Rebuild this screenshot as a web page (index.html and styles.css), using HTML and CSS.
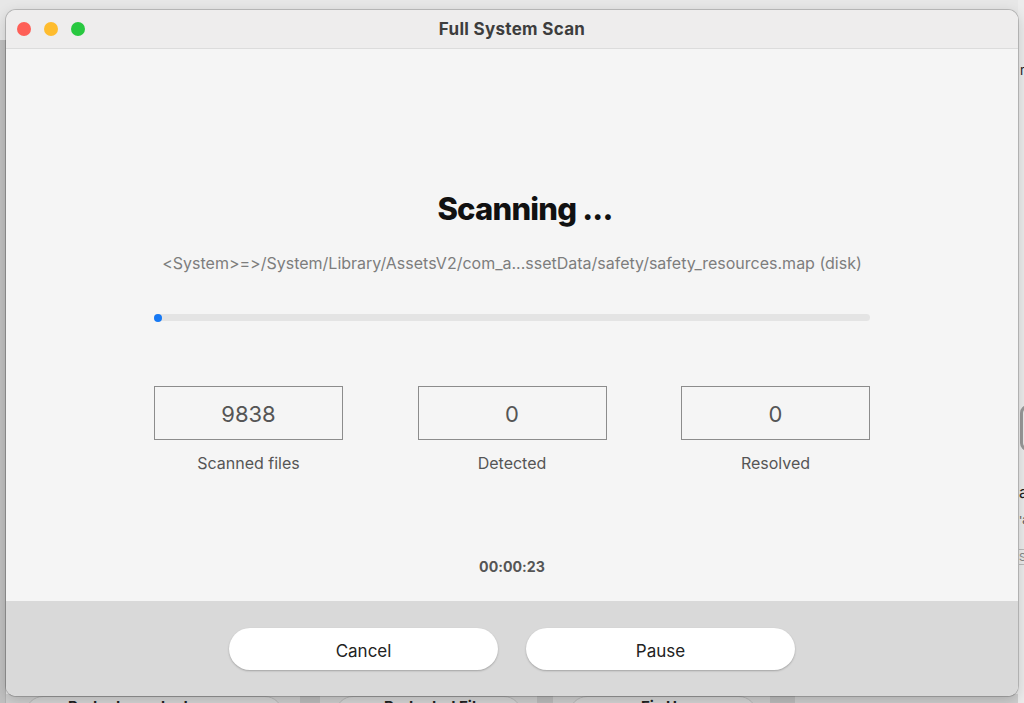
FILE: index.html
```html
<!DOCTYPE html>
<html>
<head>
<meta charset="utf-8">
<link rel="stylesheet" href="styles.css">
</head>
<body>
<div class="desktop">
  <div class="backwin">
    <div class="left-strip"></div>
    <div class="right-bits">
      <span class="rb r1">r</span>
      <span class="rb r2"></span>
      <span class="rb r3">al</span>
      <span class="rb r4">'a</span>
      <span class="rb r5">S</span>
    </div>
    <div class="back-buttons">
      <span class="gap g1"></span>
      <span class="gap g2"></span>
      <span class="gap g3"></span>
      <span class="bb b1">Protect ... ocked</span>
      <span class="bb b2">Protected Files</span>
      <span class="bb b3">Fix Up</span>
    </div>
  </div>
  <div class="window">
    <div class="titlebar">
      <div class="lights">
        <span class="light red"></span>
        <span class="light yellow"></span>
        <span class="light green"></span>
      </div>
      <div class="title">Full System Scan</div>
    </div>
    <div class="content">
      <h1 class="heading">Scanning ...</h1>
      <div class="path">&lt;System&gt;=&gt;/System/Library/AssetsV2/com_a...ssetData/safety/safety_resources.map (disk)</div>
      <div class="progress"><div class="dot"></div></div>
      <div class="stats">
        <div class="stat"><div class="box">9838</div><div class="label">Scanned files</div></div>
        <div class="stat"><div class="box">0</div><div class="label">Detected</div></div>
        <div class="stat"><div class="box">0</div><div class="label">Resolved</div></div>
      </div>
      <div class="timer">00:00:23</div>
    </div>
    <div class="footer">
      <button class="btn">Cancel</button>
      <button class="btn">Pause</button>
    </div>
  </div>
</div>
</body>
</html>
```

FILE: styles.css
```css
html, body {
  margin: 0;
  padding: 0;
  width: 1024px;
  height: 703px;
  overflow: hidden;
}
body {
  background: #e7e7e7;
  font-family: Inter, "Liberation Sans", Arial, sans-serif;
  font-variant-ligatures: none;
  font-feature-settings: "liga" 0, "calt" 0;
}
.desktop {
  position: relative;
  width: 1024px;
  height: 703px;
  padding: 10px 6px 0 6px;
  box-sizing: border-box;
}
.backwin {
  position: absolute;
  inset: 0;
  z-index: 0;
}
.left-strip {
  position: absolute;
  left: 0;
  top: 40px;
  width: 6px;
  bottom: 0;
  background: #c1c1c1;
  border-right: 1px solid #b4b4b4;
  box-sizing: border-box;
}
.right-bits {
  position: absolute;
  left: 1018px;
  top: 0;
  width: 6px;
  bottom: 0;
  background: #ececec;
  overflow: hidden;
}
.rb {
  position: absolute;
  left: 2px;
  font-size: 13px;
  color: #222;
  white-space: nowrap;
}
.r1 { top: 62px; }
.r2 { top: 405px; width: 10px; height: 40px; border: 3px solid #999; border-radius: 8px; }
.r3 { top: 482px; left: 1px; font-size: 16px; }
.r4 { top: 513px; left: 1px; font-size: 11px; color: #555; }
.r5 { top: 549px; left: 1px; font-size: 11px; color: #888; border-top: 1px solid #bbb; border-bottom: 1px solid #bbb; }
.back-buttons {
  position: absolute;
  left: 6px;
  right: 6px;
  top: 694px;
  height: 9px;
  background: #cfcfcf;
  overflow: hidden;
}
.gap {
  position: absolute;
  top: 0;
  bottom: 0;
  background: #bdbdbd;
}
.g1 { left: 294px; width: 20px; }
.g2 { left: 531px; width: 16px; }
.g3 { left: 764px; width: 25px; }
.bb {
  position: absolute;
  top: 2px;
  height: 36px;
  border: 1px solid #b8b8b8;
  border-radius: 18px;
  background: #d6d6d6;
  font-size: 15px;
  font-weight: 700;
  color: #222;
  line-height: 16px;
  padding-top: 2px;
  box-sizing: border-box;
  white-space: nowrap;
}
.b1 { left: 19px; width: 258px; padding-left: 42px; }
.b2 { left: 329px; width: 187px; padding-left: 48px; }
.b3 { left: 563px; width: 188px; padding-left: 71px; }

.window {
  position: relative;
  z-index: 1;
  width: 1012px;
  height: 686px;
  border-radius: 10px;
  overflow: hidden;
  background: #f5f5f5;
  box-shadow: 0 0 0 1px rgba(0,0,0,0.18), 0 4px 14px rgba(0,0,0,0.18);
  display: flex;
  flex-direction: column;
}
.titlebar {
  height: 38px;
  flex: 0 0 38px;
  background: #eeeded;
  border-bottom: 1px solid #dcdcdc;
  display: flex;
  align-items: center;
  position: relative;
}
.lights {
  display: flex;
  gap: 13px;
  padding-left: 11px;
}
.light {
  width: 14px;
  height: 14px;
  border-radius: 50%;
  display: block;
}
.red { background: #fe5f57; }
.yellow { background: #febc2e; }
.green { background: #28c840; }
.title {
  position: absolute;
  left: 0;
  right: 0;
  text-align: center;
  font-size: 17px;
  font-weight: 700;
  color: #3d3d3d;
  line-height: 38px;
  top: 0;
  letter-spacing: 0.3px;
}
.content {
  flex: 0 0 552px;
  height: 552px;
  padding: 0 148px;
  box-sizing: border-box;
  display: flex;
  flex-direction: column;
  align-items: stretch;
}
.heading {
  margin: 140px 0 0 0;
  padding-left: 26px;
  font-size: 31px;
  line-height: 40px;
  font-weight: 800;
  color: #111;
  text-align: center;
  letter-spacing: -0.8px;
}
.path {
  margin-top: 24px;
  font-size: 16px;
  line-height: 20px;
  color: #7d7d7d;
  text-align: center;
  white-space: nowrap;
}
.progress {
  margin-top: 41px;
  height: 7px;
  border-radius: 4px;
  background: #e4e4e4;
  position: relative;
}
.dot {
  position: absolute;
  left: 0;
  top: -0.5px;
  width: 8px;
  height: 8px;
  border-radius: 50%;
  background: #1779f4;
}
.stats {
  margin-top: 65px;
  display: flex;
  justify-content: space-between;
}
.stat {
  width: 189px;
  display: flex;
  flex-direction: column;
  align-items: stretch;
}
.box {
  height: 54px;
  border: 1.5px solid #8c8c8c;
  box-sizing: border-box;
  display: flex;
  align-items: center;
  justify-content: center;
  font-size: 22px;
  color: #555;
  padding-top: 2px;
}
.label {
  margin-top: 13px;
  font-size: 16px;
  line-height: 20px;
  color: #555;
  text-align: center;
}
.timer {
  margin-top: 84px;
  font-size: 14.2px;
  line-height: 20px;
  font-weight: 700;
  color: #555;
  text-align: center;
}
.footer {
  flex: 1 1 auto;
  background: #d9d9d9;
  display: flex;
  justify-content: center;
  align-items: flex-start;
  gap: 28px;
  padding-top: 27px;
  box-sizing: border-box;
}
.btn {
  width: 269px;
  height: 42px;
  border: none;
  border-radius: 21px;
  background: #ffffff;
  box-shadow: 0 1px 2px rgba(0,0,0,0.25);
  font-family: Inter, "Liberation Sans", Arial, sans-serif;
  font-size: 17px;
  color: #222;
  padding: 3px 0 0 0;
}
```
